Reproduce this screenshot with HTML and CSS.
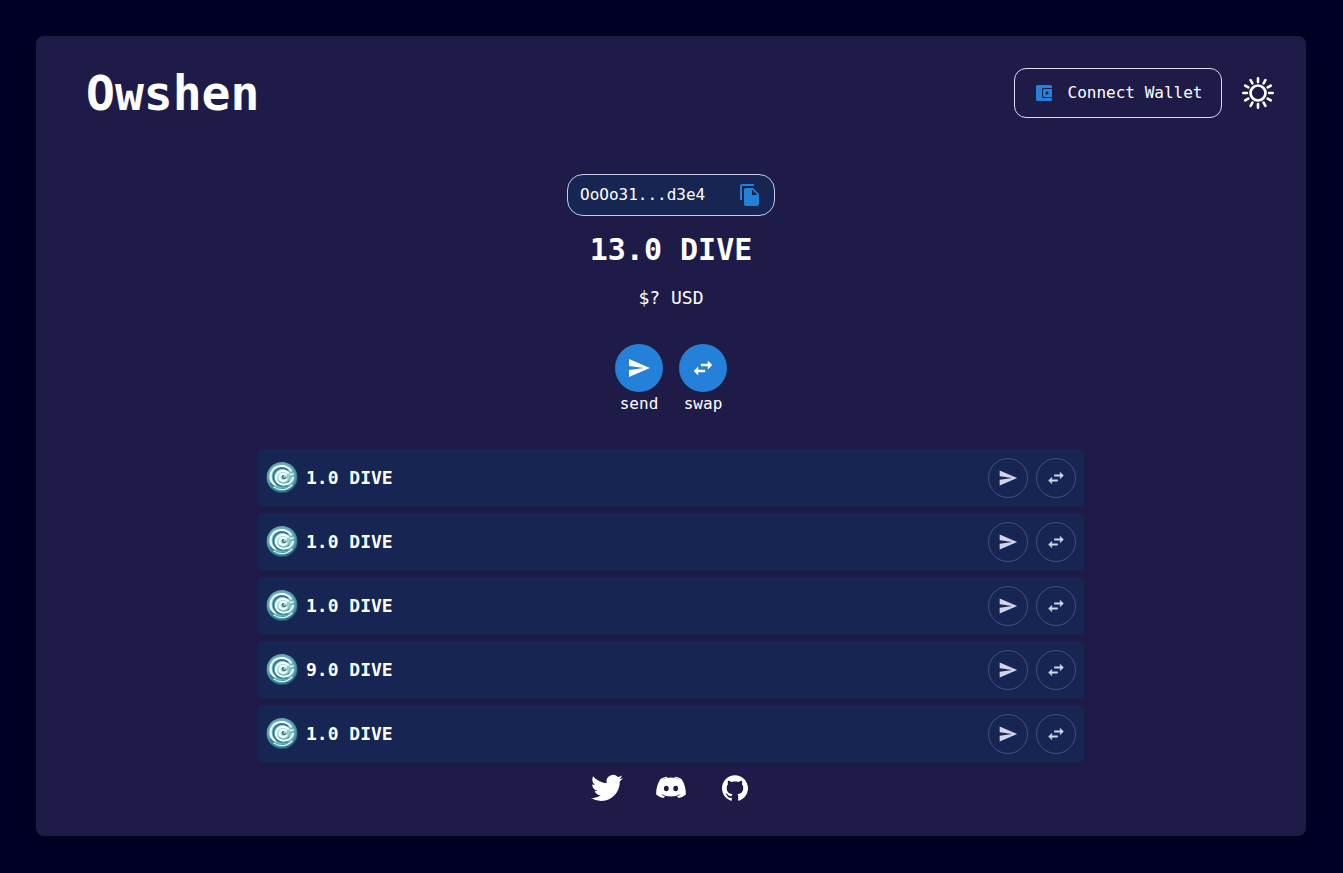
FILE: index.html
```html
<!DOCTYPE html>
<html lang="en">
<head>
<meta charset="utf-8">
<meta name="viewport" content="width=device-width, initial-scale=1">
<title>Owshen</title>
<link rel="stylesheet" href="styles.css">
</head>
<body>
<svg class="sprite" aria-hidden="true">
  <defs>
    <radialGradient id="sea" cx="48%" cy="45%" r="54%">
      <stop offset="0" stop-color="#b4e2e4"/>
      <stop offset="0.6" stop-color="#7fc0c7"/>
      <stop offset="0.85" stop-color="#4f9faa"/>
      <stop offset="1" stop-color="#1d5a70"/>
    </radialGradient>
  </defs>
  <symbol id="send" viewBox="0 0 24 24"><path fill="currentColor" d="M2.01 21 23 12 2.01 3 2 10l15 2-15 2z"/></symbol>
  <symbol id="swap" viewBox="0 0 24 24"><path fill="currentColor" stroke="currentColor" stroke-width=".5" d="M6.990 11 3 15l3.990 4v-3H14v-2H6.990v-3zM21 9l-3.990-4v3H10v2h7.010v3L21 9z"/></symbol>
  <symbol id="wave" viewBox="0 0 32 32">
    <circle cx="16" cy="15.500" r="15.500" fill="url(#sea)"/>
    <g fill="none" stroke-linecap="round">
      <path stroke="#2c7180" stroke-width="1.600" d="M22 8C15 3 7 8 7.500 15.500S15 25 21 23.500M19.500 16c-1 1-3 .5-3-1.500 0-1.500 2-2.500 4-1.500M5 21.500c4 6 12 8 19 3.500M13 20c3 3 8 2.500 10-.5"/>
      <path stroke="#f2fefd" stroke-width="2" d="M25 8.500C19 1.500 8 3 5 11c-1.500 5 0 9 4 12"/>
      <path stroke="#f2fefd" stroke-width="2.200" d="M22 11c-4-4-11-2-12 4-.6 5 5 9 11 7 3-1 5-3 6-6M20 12.800c-3-2-6.500-.3-6.500 2.700 0 3.500 4.500 4.500 7 2"/>
      <path stroke="#dcf7f6" stroke-width="1.300" d="M8 25c6 4 13 3.500 18-2M24 12.500l3.500-.5"/>
    </g>
  </symbol>
</svg>
<div class="card">
  <header class="header">
    <h1 class="brand">Owshen</h1>
    <div class="tools">
      <button class="connect" type="button">
        <svg class="wallet" viewBox="0 0 16 16" aria-hidden="true">
          <path fill="#2481d7" d="M1.500 0h13Q16 0 16 1.500V3H7.500Q6 3 6 4.500v7Q6 13 7.500 13H16v1.500q0 1.500-1.500 1.500h-13Q0 16 0 14.500v-13Q0 0 1.500 0z"/>
          <path fill="#2481d7" fill-rule="evenodd" d="M8 4h8v8H8q-1 0-1-1V5q0-1 1-1zm3 2.500a1.500 1.500 0 1 0 0 3 1.500 1.500 0 1 0 0-3z"/>
        </svg>
        <span>Connect Wallet</span>
      </button>
      <button class="theme" type="button" aria-label="Toggle theme">
        <svg class="sun" viewBox="0 0 32 32" aria-hidden="true">
          <g fill="none" stroke="#fff" stroke-width="2.700">
            <circle cx="16" cy="16" r="7.500"/>
            <path stroke-linecap="round" stroke-width="2.600" d="M16 1.300v3.600M16 27.100v3.600M1.300 16h3.600M27.100 16h3.600M8.600 3.200l1.800 3.100M21.600 25.700l1.800 3.100M3.200 8.600l3.100 1.800M25.700 21.600l3.100 1.800M3.200 23.400l3.100-1.800M25.700 10.400l3.100-1.800M8.600 28.800l1.800-3.100M21.600 6.300l1.800-3.100"/>
          </g>
        </svg>
      </button>
    </div>
  </header>
  <main class="main">
    <button class="address" type="button" title="Copy address">
      <span>OoOo31...d3e4</span>
      <svg class="icon" viewBox="0 0 24 24" aria-hidden="true"><path fill="#2481d7" d="M16 1H4c-1.100 0-2 .9-2 2v14h2V3h12V1zm-1 4 6 6v10c0 1.100-.9 2-2 2H7.990C6.890 23 6 22.100 6 21V7c0-1.100.89-2 1.990-2H15zm-1 7h5.500L14 6.500V12z"/></svg>
    </button>
    <h2 class="balance">13.0 DIVE</h2>
    <p class="fiat">$? USD</p>
    <div class="actions">
      <button class="action" type="button"><span class="disc"><svg class="icon" aria-hidden="true"><use href="#send"/></svg></span>send</button>
      <button class="action" type="button"><span class="disc"><svg class="icon" aria-hidden="true"><use href="#swap"/></svg></span>swap</button>
    </div>
    <ul class="coins">
      <li class="coin"><svg class="logo" aria-hidden="true"><use href="#wave"/></svg><span class="amount">1.0 DIVE</span><button class="ring" type="button" aria-label="Send"><svg class="mini" aria-hidden="true"><use href="#send"/></svg></button><button class="ring" type="button" aria-label="Swap"><svg class="mini" aria-hidden="true"><use href="#swap"/></svg></button></li>
      <li class="coin"><svg class="logo" aria-hidden="true"><use href="#wave"/></svg><span class="amount">1.0 DIVE</span><button class="ring" type="button" aria-label="Send"><svg class="mini" aria-hidden="true"><use href="#send"/></svg></button><button class="ring" type="button" aria-label="Swap"><svg class="mini" aria-hidden="true"><use href="#swap"/></svg></button></li>
      <li class="coin"><svg class="logo" aria-hidden="true"><use href="#wave"/></svg><span class="amount">1.0 DIVE</span><button class="ring" type="button" aria-label="Send"><svg class="mini" aria-hidden="true"><use href="#send"/></svg></button><button class="ring" type="button" aria-label="Swap"><svg class="mini" aria-hidden="true"><use href="#swap"/></svg></button></li>
      <li class="coin"><svg class="logo" aria-hidden="true"><use href="#wave"/></svg><span class="amount">9.0 DIVE</span><button class="ring" type="button" aria-label="Send"><svg class="mini" aria-hidden="true"><use href="#send"/></svg></button><button class="ring" type="button" aria-label="Swap"><svg class="mini" aria-hidden="true"><use href="#swap"/></svg></button></li>
      <li class="coin"><svg class="logo" aria-hidden="true"><use href="#wave"/></svg><span class="amount">1.0 DIVE</span><button class="ring" type="button" aria-label="Send"><svg class="mini" aria-hidden="true"><use href="#send"/></svg></button><button class="ring" type="button" aria-label="Swap"><svg class="mini" aria-hidden="true"><use href="#swap"/></svg></button></li>
    </ul>
  </main>
  <footer class="social">
    <a href="#twitter" aria-label="Twitter"><svg class="brandmark" viewBox="0 0 24 24" aria-hidden="true"><path fill="#fff" d="M23.953 4.570a10 10 0 01-2.825.775 4.958 4.958 0 002.163-2.723c-.951.555-2.005.959-3.127 1.184a4.920 4.920 0 00-8.384 4.482C7.690 8.095 4.067 6.130 1.640 3.162a4.822 4.822 0 00-.666 2.475c0 1.710.87 3.213 2.188 4.096a4.904 4.904 0 01-2.228-.616v.06a4.923 4.923 0 003.946 4.827 4.996 4.996 0 01-2.212.085 4.936 4.936 0 004.604 3.417 9.867 9.867 0 01-6.102 2.105c-.39 0-.779-.023-1.170-.067a13.995 13.995 0 007.557 2.209c9.053 0 13.998-7.496 13.998-13.985 0-.21 0-.42-.015-.63A9.935 9.935 0 0024 4.590z"/></svg></a>
    <a href="#discord" aria-label="Discord"><svg class="brandmark" viewBox="0 0 32 32" aria-hidden="true">
      <path fill="#fff" fill-rule="evenodd" d="M5.500 7C7.500 5.700 10 4.900 12 4.700L12.500 5.500Q9.500 6.300 7.300 7.900Q11.500 5.600 16 5.600T24.700 7.900Q22.500 6.300 19.500 5.500L20 4.700C22 4.900 24.500 5.700 26.500 7C29.500 11.500 31.200 17 30.800 22.500Q27.500 25.600 23.500 26L22 24.200Q24.300 23.500 25.700 21.900Q21 24.600 16 24.600T6.300 21.900Q7.700 23.500 10 24.200L8.500 26Q4.500 25.600 1.200 22.500C.8 17 2.500 11.500 5.500 7zM11.300 13.800a2.400 2.700 0 1 0 0 5.400 2.400 2.700 0 1 0 0-5.400zM20.700 13.800a2.400 2.700 0 1 0 0 5.400 2.400 2.700 0 1 0 0-5.400z"/></svg></a>
    <a href="#github" aria-label="GitHub"><svg class="brandmark brandmark-small" viewBox="0 0 24 24" aria-hidden="true"><path fill="#fff" d="M12 .297c-6.630 0-12 5.373-12 12 0 5.303 3.438 9.800 8.205 11.385.6.113.82-.258.82-.577 0-.285-.01-1.040-.015-2.040-3.338.724-4.042-1.610-4.042-1.610C4.422 18.070 3.633 17.700 3.633 17.700c-1.087-.744.084-.729.084-.729 1.205.084 1.838 1.236 1.838 1.236 1.070 1.835 2.809 1.305 3.495.998.108-.776.417-1.305.76-1.605-2.665-.3-5.466-1.332-5.466-5.930 0-1.310.465-2.380 1.235-3.220-.135-.303-.54-1.523.105-3.176 0 0 1.005-.322 3.300 1.230.96-.267 1.980-.399 3-.405 1.020.006 2.040.138 3 .405 2.280-1.552 3.285-1.230 3.285-1.230.645 1.653.24 2.873.12 3.176.765.84 1.230 1.910 1.230 3.220 0 4.610-2.805 5.625-5.475 5.920.42.36.81 1.096.81 2.220 0 1.606-.015 2.896-.015 3.286 0 .315.21.69.825.57C20.565 22.092 24 17.592 24 12.297c0-6.627-5.373-12-12-12"/></svg></a>
  </footer>
</div>
</body>
</html>
```
FILE: styles.css
```css
* { box-sizing: border-box; }

body {
  margin: 0;
  padding: 36px 37px 36px 36px;
  min-height: 100vh;
  background: #000027;
  color: #fff;
  font: 16px/24px "DejaVu Sans Mono", "Liberation Mono", monospace;
}

h1, h2, p, ul { margin: 0; padding: 0; }

svg { display: block; }

button {
  padding: 0;
  border: 0;
  background: none;
  color: inherit;
  font: inherit;
  cursor: pointer;
}

.sprite { position: absolute; width: 0; height: 0; }

.card {
  padding: 32px;
  border-radius: 8px;
  background: #1f1b48;
  box-shadow: 0 4px 24px rgba(0, 0, 0, 0.2);
}

.header {
  display: flex;
  align-items: center;
  justify-content: space-between;
  height: 50px;
  padding-left: 18px;
}

.brand { font-size: 48px; line-height: 50px; }

.tools { display: flex; align-items: center; gap: 20px; }

.connect {
  display: flex;
  align-items: center;
  justify-content: center;
  gap: 16px;
  width: 208px;
  height: 50px;
  padding-left: 2px;
  border: 1px solid #dcdcf0;
  border-radius: 12px;
}

.wallet { width: 16px; height: 16px; }
.sun { width: 32px; height: 32px; }
.icon { width: 24px; height: 24px; }

.main { display: flex; flex-direction: column; align-items: center; padding-top: 56px; }

.address {
  display: flex;
  align-items: center;
  justify-content: space-between;
  width: 208px;
  height: 42px;
  padding: 0 12px;
  border: 1px solid #c4cbe6;
  border-radius: 16px;
  background: #162552;
}

.balance { margin-top: 16px; font-size: 30px; line-height: 36px; }

.fiat { margin-top: 18px; font-size: 18px; }

.actions { display: flex; gap: 16px; margin-top: 34px; }

.action { width: 48px; }

.disc {
  display: flex;
  align-items: center;
  justify-content: center;
  height: 48px;
  border-radius: 50%;
  background: #2481d7;
}

.coins {
  display: flex;
  flex-direction: column;
  gap: 8px;
  width: 826px;
  max-width: 100%;
  margin-top: 34px;
  list-style: none;
}

.coin {
  display: flex;
  align-items: center;
  gap: 8px;
  padding: 8px;
  border-radius: 4px;
  background: #162552;
  box-shadow: 0 0 3px #162552;
}

.logo { width: 32px; height: 32px; }

.amount { flex: 1; font-size: 18px; font-weight: bold; }

.ring {
  display: flex;
  align-items: center;
  justify-content: center;
  width: 40px;
  height: 40px;
  border: 1px solid #45507e;
  border-radius: 50%;
  color: #d0d5e8;
}

.mini { width: 20px; height: 20px; }

.social {
  display: flex;
  align-items: center;
  justify-content: center;
  gap: 32px;
  padding-top: 10px;
}

.brandmark { width: 32px; height: 32px; }
.brandmark-small { padding: 3px; }
```
